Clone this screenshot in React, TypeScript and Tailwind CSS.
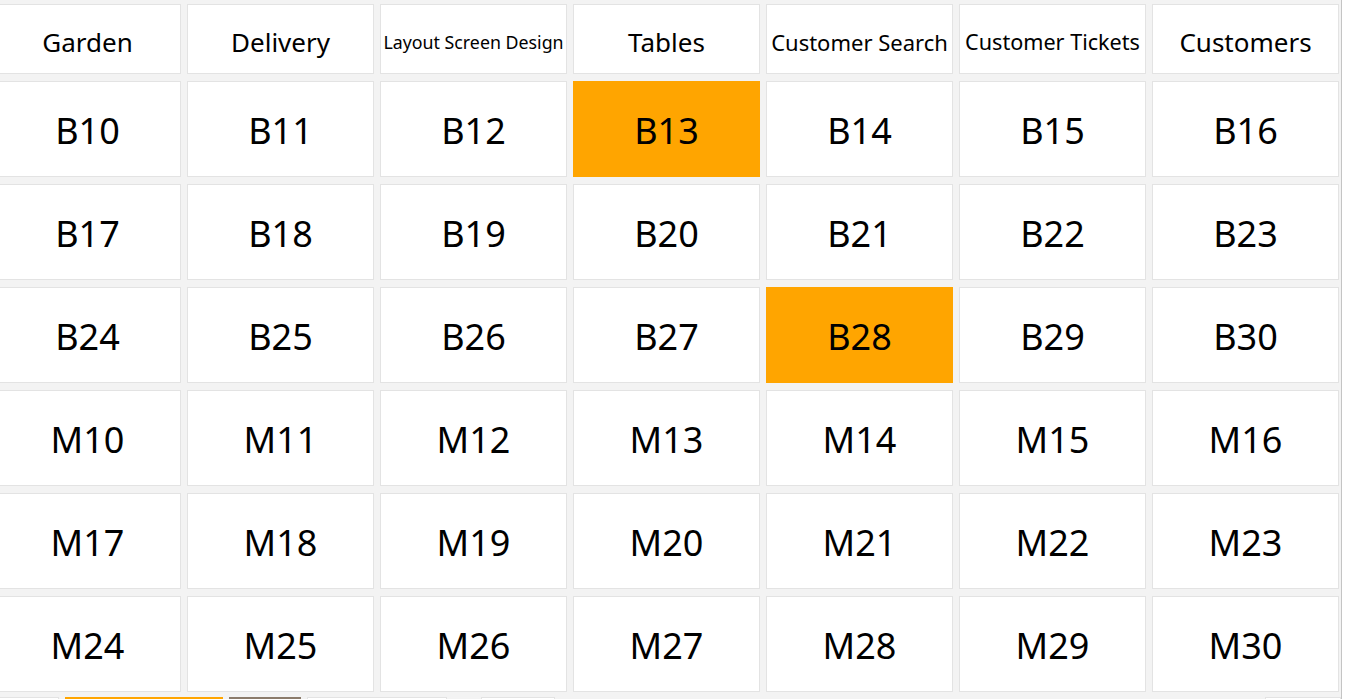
import React from "react";

const headers: { label: string; size: string }[] = [
  { label: "Garden", size: "text-[26px]" },
  { label: "Delivery", size: "text-[26px]" },
  { label: "Layout Screen Design", size: "text-[17.8px]" },
  { label: "Tables", size: "text-[26px]" },
  { label: "Customer Search", size: "text-[22px]" },
  { label: "Customer Tickets", size: "text-[21.6px]" },
  { label: "Customers", size: "text-[26px]" },
];

const cells: string[] = [];
for (let i = 10; i <= 30; i++) cells.push("B" + i);
for (let i = 10; i <= 30; i++) cells.push("M" + i);

const active = new Set(["B13", "B28"]);

export default function App() {
  return (
    <div
      className="w-[1348px] h-[699px] overflow-hidden bg-[#f3f3f3] flex text-black"
      style={{ fontFamily: '"Noto Sans", "Open Sans", sans-serif' }}
    >
      <div className="w-[1341px] h-full overflow-hidden pt-[4px]">
        <div className="ml-[-6px] grid grid-cols-[repeat(7,187px)] gap-x-[6px] gap-y-[7px]">
          {headers.map((h) => (
            <div
              key={h.label}
              className={`h-[70px] bg-white border border-[#e3e3e3] flex items-center justify-center whitespace-nowrap overflow-hidden pt-[6px] ${h.size}`}
            >
              {h.label}
            </div>
          ))}
          {cells.map((c) => (
            <div
              key={c}
              className={`h-[96px] flex items-center justify-center text-[36px] pt-[3px] border ${
                active.has(c)
                  ? "bg-[#ffa500] border-[#ffa500]"
                  : "bg-white border-[#e3e3e3]"
              }`}
            >
              {c}
            </div>
          ))}
        </div>
        <div className="mt-[5px] ml-[-6px] flex h-[20px]">
          <div className="w-[65px] bg-white border border-[#e3e3e3]" />
          <div className="ml-[6px] w-[158px] bg-[#ffa500]" />
          <div className="ml-[6px] w-[72px] bg-[#8b7b6b]" />
          <div className="ml-[6px] w-[140px] bg-white border border-[#e3e3e3]" />
          <div className="ml-[34px] w-[74px] bg-white border border-[#e3e3e3]" />
          <div className="ml-auto w-[76px] bg-white border border-[#e3e3e3]" />
        </div>
      </div>
      <div className="w-[1px] h-full bg-[#c4c4c4]" />
      <div className="flex-1 h-full bg-white" />
    </div>
  );
}
